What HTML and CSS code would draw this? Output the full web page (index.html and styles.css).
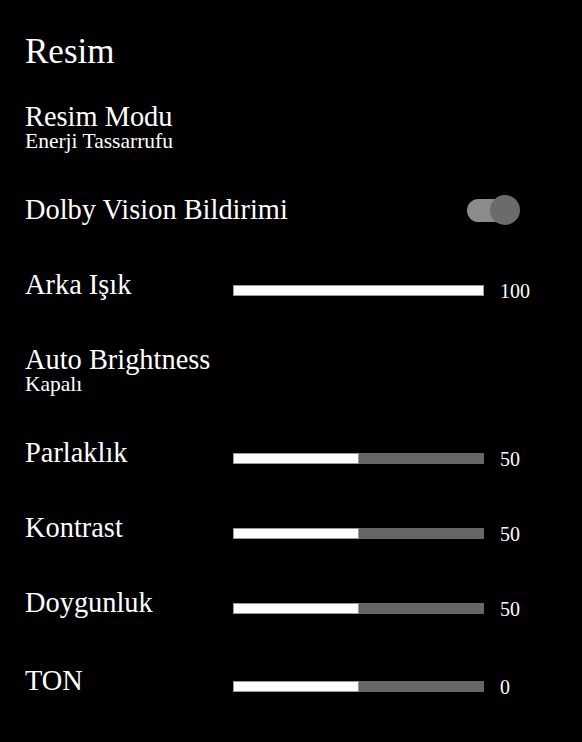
FILE: index.html
```html
<!DOCTYPE html>
<html lang="tr">
<head>
<meta charset="utf-8">
<title>Resim</title>
<link rel="stylesheet" href="styles.css">
</head>
<body>
<div class="page">
  <h1 class="title">Resim</h1>
  <div class="list">
    <div class="item">
      <div class="row"><span class="label">Resim Modu</span></div>
      <div class="sub">Enerji Tassarrufu</div>
    </div>
    <div class="item">
      <div class="row">
        <span class="label">Dolby Vision Bildirimi</span>
        <span class="toggle"><span class="track"></span><span class="knob"></span></span>
      </div>
    </div>
    <div class="item">
      <div class="row">
        <span class="label label-fixed">Arka Işık</span>
        <span class="slider"><span class="fill" style="width:100%"></span></span>
        <span class="value">100</span>
      </div>
    </div>
    <div class="item">
      <div class="row"><span class="label">Auto Brightness</span></div>
      <div class="sub">Kapalı</div>
    </div>
    <div class="item">
      <div class="row">
        <span class="label label-fixed">Parlaklık</span>
        <span class="slider"><span class="fill" style="width:50%"></span></span>
        <span class="value">50</span>
      </div>
    </div>
    <div class="item">
      <div class="row">
        <span class="label label-fixed">Kontrast</span>
        <span class="slider"><span class="fill" style="width:50%"></span></span>
        <span class="value">50</span>
      </div>
    </div>
    <div class="item">
      <div class="row">
        <span class="label label-fixed">Doygunluk</span>
        <span class="slider"><span class="fill" style="width:50%"></span></span>
        <span class="value">50</span>
      </div>
    </div>
    <div class="item item-last">
      <div class="row">
        <span class="label label-fixed">TON</span>
        <span class="slider"><span class="fill" style="width:50%"></span></span>
        <span class="value">0</span>
      </div>
    </div>
  </div>
</div>
</body>
</html>
```
FILE: styles.css
```css
html, body {
  margin: 0;
  padding: 0;
  background: #000;
}
body {
  width: 582px;
  height: 742px;
  overflow: hidden;
  color: #fff;
  font-family: "Liberation Serif", "Times New Roman", serif;
}
.page {
  padding: 32px 0 0 25px;
}
.title {
  margin: 0;
  font-size: 35px;
  font-weight: normal;
  line-height: 40px;
}
.list {
  display: flex;
  flex-direction: column;
  gap: 45px;
  margin-top: 30px;
}
.row {
  display: flex;
  align-items: flex-end;
  height: 30px;
}
.label {
  font-size: 28.4px;
  line-height: 30px;
  white-space: nowrap;
}
.label-fixed {
  width: 208px;
  flex: none;
}
.sub {
  font-size: 21.5px;
  line-height: 18px;
}
.slider {
  position: relative;
  flex: none;
  width: 251px;
  height: 11px;
  margin-bottom: 4px;
  background: #666;
  box-sizing: border-box;
  overflow: hidden;
}
.fill {
  position: absolute;
  left: 0;
  top: 0;
  bottom: 0;
  background: #fff;
  box-shadow: inset 0 0 0 1px #9a9a9a;
}
.value {
  margin-left: 16px;
  font-size: 20px;
  line-height: 18px;
}
.item-last {
  margin-top: 3px;
}
.toggle {
  position: relative;
  align-self: center;
  margin-left: auto;
  margin-right: 62px;
  width: 53px;
  height: 30px;
  display: flex;
  align-items: center;
}
.track {
  width: 46px;
  height: 23px;
  border-radius: 12px;
  background: #8c8c8c;
}
.knob {
  position: absolute;
  right: 0;
  top: 0;
  width: 30px;
  height: 30px;
  border-radius: 50%;
  background: #6b6b6b;
}
```
